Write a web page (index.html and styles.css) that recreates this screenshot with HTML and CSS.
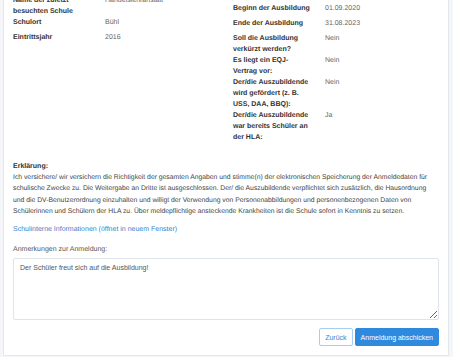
FILE: index.html
```html
<!DOCTYPE html>
<html lang="de">
<head>
  <meta charset="UTF-8" />
  <meta name="viewport" content="width=device-width, initial-scale=1.0"/>
  <title>Anmeldung | Zusammenfassung</title>
  <link rel="stylesheet" href="styles.css">
</head>
<body>

  <div class="card">

    <!-- Angaben -->
    <div class="details">
      <div class="col">
        <div class="row">
          <div class="label">Name der zuletzt besuchten Schule</div>
          <div class="value">Handelslehranstalt</div>
        </div>
        <div class="row">
          <div class="label">Schulort</div>
          <div class="value">Bühl</div>
        </div>
        <div class="row">
          <div class="label">Eintrittsjahr</div>
          <div class="value">2016</div>
        </div>
      </div>

      <div class="col col-right">
        <div class="row">
          <div class="label">Beginn der Ausbildung</div>
          <div class="value">01.09.2020</div>
        </div>
        <div class="row">
          <div class="label">Ende der Ausbildung</div>
          <div class="value">31.08.2023</div>
        </div>
        <div class="row">
          <div class="label">Soll die Ausbildung verkürzt werden?</div>
          <div class="value">Nein</div>
        </div>
        <div class="row">
          <div class="label">Es liegt ein EQJ-Vertrag vor:</div>
          <div class="value">Nein</div>
        </div>
        <div class="row">
          <div class="label">Der/die Auszubildende wird gefördert (z. B. USS, DAA, BBQ):</div>
          <div class="value">Nein</div>
        </div>
        <div class="row">
          <div class="label">Der/die Auszubildende war bereits Schüler an der HLA:</div>
          <div class="value">Ja</div>
        </div>
      </div>
    </div>

    <!-- Erklärung -->
    <div class="declaration">
      <strong>Erklärung:</strong>
      <p>Ich versichere/ wir versichern die Richtigkeit der gesamten Angaben und stimme(n) der elektronischen Speicherung der Anmeldedaten für schulische Zwecke zu. Die Weitergabe an Dritte ist ausgeschlossen. Der/ die Auszubildende verpflichtet sich zusätzlich, die Hausordnung und die DV-Benutzerordnung einzuhalten und willigt der Verwendung von Personenabbildungen und personenbezogenen Daten von Schülerinnen und Schülern der HLA zu. Über meldepflichtige ansteckende Krankheiten ist die Schule sofort in Kenntnis zu setzen.</p>
    </div>

    <a href="#" class="info-link">Schulinterne Informationen (öffnet in neuem Fenster)</a>

    <div class="form-group">
      <label for="remarks">Anmerkungen zur Anmeldung:</label>
      <textarea id="remarks" name="remarks">Der Schüler freut sich auf die Ausbildung!</textarea>
    </div>

    <div class="button-group">
      <button class="btn btn-outline">Zurück</button>
      <button class="btn btn-primary">Anmeldung abschicken</button>
    </div>

  </div>

</body>
</html>
```

FILE: styles.css
```css
body {
  font-family: "Liberation Sans", Arial, sans-serif;
  font-size: 7px;
  line-height: 11px;
  margin: 0;
  background: #f4f6f9;
  color: #333;
  text-rendering: geometricPrecision;
}

.card {
  background: #fff;
  border: 1px solid #e3e8ee;
  border-top: none;
  margin: -5px 4px 0 3px;
  padding: 0 9px 9px;
}

/* Angaben in zwei Spalten */
.details {
  display: grid;
  grid-template-columns: 220px 1fr;
}

.col-right {
  padding-top: 8px;
}

.row {
  display: grid;
  grid-template-columns: 78px 1fr;
  gap: 14px;
  min-height: 15px;
}

.label {
  font-weight: bold;
  color: #333;
}

.value {
  color: #666;
}

.declaration {
  margin-top: 18px;
}

.declaration strong {
  display: block;
  color: #333;
}

.declaration p {
  margin: 0;
  font-size: 6.8px;
  line-height: 11.3px;
  color: #444;
}

.info-link {
  display: block;
  margin-top: 7px;
  color: #3a82cc;
  text-decoration: none;
}

.form-group {
  margin-top: 9px;
}

label {
  display: block;
  color: #555;
  margin-bottom: 3px;
}

textarea {
  display: block;
  box-sizing: border-box;
  width: 100%;
  height: 62px;
  padding: 3px 6px;
  font-family: inherit;
  font-size: 7px;
  line-height: 11px;
  color: #555;
  border: 1px solid #dfe4ea;
  border-radius: 2px;
  resize: vertical;
}

.button-group {
  display: flex;
  justify-content: flex-end;
  gap: 2px;
  margin-top: 8px;
}

.btn {
  height: 18px;
  padding: 0 5px;
  font-family: inherit;
  font-size: 7px;
  border-radius: 2px;
  cursor: pointer;
}

.btn-outline {
  background: #fff;
  color: #3a82cc;
  border: 1px solid #a9cdf0;
}

.btn-primary {
  background: #2f8ade;
  color: #fff;
  border: 1px solid #2f8ade;
}

.btn:hover {
  opacity: 0.9;
}
```
